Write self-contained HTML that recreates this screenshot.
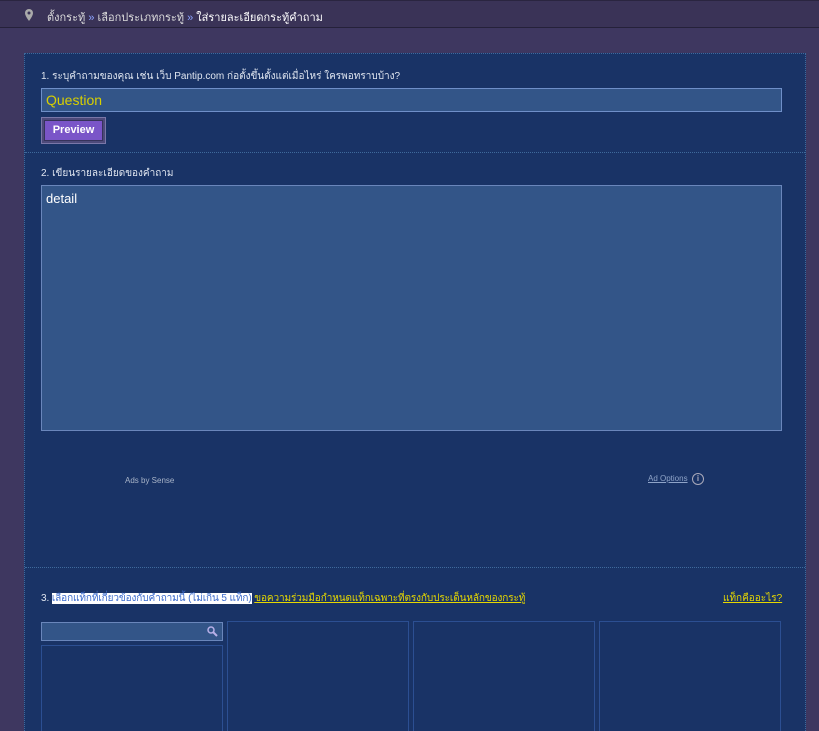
<!DOCTYPE html>
<html><head><meta charset="utf-8"><style>
html,body{margin:0;width:819px;height:731px;overflow:hidden}
body{background:#3e3760;font-family:"Liberation Sans",Tahoma,sans-serif;position:relative}
.top{position:absolute;left:0;top:0;width:819px;height:28px;background:#3a3357;border-top:1px solid #2a2540;border-bottom:1px solid #25213a;box-sizing:border-box}
.crumb{position:absolute;left:47px;top:7px;font-size:11px;color:#ddd}
.crumb b{color:#8da4ff;font-weight:normal}
.panel{position:absolute;left:24px;top:53px;width:782px;height:678px;background:#193366;border:1px dotted #3f6a9c;border-bottom:none;box-sizing:border-box;overflow:hidden}
.lbl{position:absolute;font-size:10px;color:#e0e6f0}
.inp{position:absolute;background:#335588;border:1px solid #6f8fc8;box-sizing:border-box}
.sep{position:absolute;left:0;width:780px;border-top:1px dotted #3f6a9c}
.box{position:absolute;border:1px solid #2c4f92;border-bottom:none;box-sizing:border-box;top:567px;height:111px}
</style></head><body>
<div class="top">
<svg style="position:absolute;left:25px;top:8px" width="8" height="12" viewBox="0 0 8 12"><path d="M4 0a4 4 0 0 0-4 4c0 3 4 8 4 8s4-5 4-8a4 4 0 0 0-4-4z" fill="#aaa"/><circle cx="4" cy="4" r="1.5" fill="#3a3357"/></svg>
<div class="crumb">ตั้งกระทู้ <b>»</b> เลือกประเภทกระทู้ <b>»</b> <span style="color:#fff">ใส่รายละเอียดกระทู้คำถาม</span></div>
</div>
<div class="panel">
<div class="lbl" style="left:16px;top:15px">1. ระบุคำถามของคุณ เช่น เว็บ Pantip.com ก่อตั้งขึ้นตั้งแต่เมื่อไหร่ ใครพอทราบบ้าง?</div>
<div class="inp" style="left:16px;top:34px;width:741px;height:24px"><span style="position:absolute;left:4px;top:3px;font-size:14px;color:#d8d000">Question</span></div>
<div style="position:absolute;left:16px;top:63px;width:65px;height:27px;background:#4d4a7a;border:1px solid #7a77a8;box-sizing:border-box"><div style="position:absolute;left:2px;top:2px;width:59px;height:21px;background:#7a55c8;border:1px solid #36335a;box-sizing:border-box;color:#fff;font-weight:bold;font-size:11px;text-align:center;line-height:19px">Preview</div></div>
<div class="sep" style="top:98px"></div>
<div class="lbl" style="left:16px;top:112px">2. เขียนรายละเอียดของคำถาม</div>
<div class="inp" style="left:16px;top:131px;width:741px;height:246px;border-color:#6a86bb"><span style="position:absolute;left:4px;top:5px;font-size:13px;color:#fff">detail</span></div>
<div style="position:absolute;left:100px;top:422px;font-size:8px;color:#a8b4c8">Ads by Sense</div>
<div style="position:absolute;left:623px;top:420px;font-size:8px;color:#8fa4c8;text-decoration:underline">Ad Options</div>
<div style="position:absolute;left:667px;top:419px;width:10px;height:10px;border:1px solid #aab;border-radius:50%;font-size:8px;color:#aab;text-align:center;line-height:10px;font-weight:bold">i</div>
<div class="sep" style="top:513px"></div>
<div style="position:absolute;left:16px;top:537px;font-size:10px;color:#e0e6f0;letter-spacing:-0.1px">3. <span style="background:#fff;color:#3a6acc">เลือกแท็กที่เกี่ยวข้องกับคำถามนี้ (ไม่เกิน 5 แท็ก)</span> <span style="color:#e6d800;text-decoration:underline">ขอความร่วมมือกำหนดแท็กเฉพาะที่ตรงกับประเด็นหลักของกระทู้</span></div>
<div style="position:absolute;left:698px;top:537px;font-size:10px;color:#e6d800;text-decoration:underline">แท็กคืออะไร?</div>
<div class="inp" style="left:16px;top:568px;width:182px;height:19px;border-color:#6a86bb"><svg style="position:absolute;right:4px;top:3px" width="11" height="11" viewBox="0 0 11 11"><circle cx="4" cy="4" r="3" fill="none" stroke="#b8b0e8" stroke-width="1.5"/><path d="M6 6l4 4" stroke="#b8b0e8" stroke-width="2"/></svg></div>
<div class="box" style="left:16px;top:591px;width:182px;height:87px"></div>
<div class="box" style="left:202px;width:182px"></div>
<div class="box" style="left:388px;width:182px"></div>
<div class="box" style="left:574px;width:182px"></div>
</div>
</body></html>
